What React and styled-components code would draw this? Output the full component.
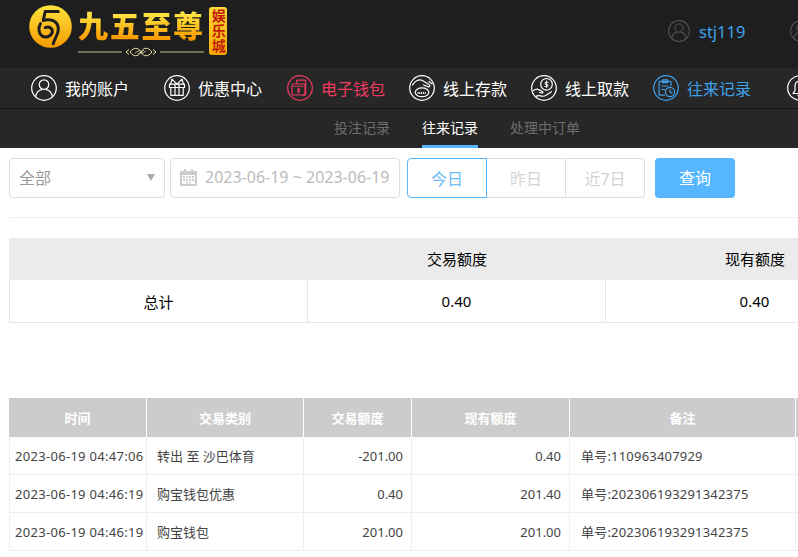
import React from 'react';
import styled, { createGlobalStyle } from 'styled-components';

const GlobalStyle = createGlobalStyle`
  html, body {
    margin: 0;
    padding: 0;
    overflow: hidden;
    background: #fff;
  }
  body {
    font-family: "Noto Sans", "Noto Sans CJK SC", sans-serif;
  }
`;

const Page = styled.div`
  width: 798px;
  height: 557px;
  overflow: hidden;
`;

const Header = styled.header`
  display: flex;
  align-items: flex-start;
  height: 68px;
  background: #1e1e1e;
`;

const Brand = styled.div`
  display: flex;
  flex: none;
  align-items: flex-start;
  width: 668px;
  height: 68px;
  padding: 5px 0 0 29px;
  box-sizing: border-box;
`;

const BrandWords = styled.div`
  display: flex;
  flex-direction: column;
  margin-left: 6px;
`;

const BrandName = styled.div`
  height: 36px;
  font-size: 30px;
  line-height: 36px;
  font-weight: 900;
  letter-spacing: 1.7px;
  white-space: nowrap;
  margin-top: 3px;
  background: linear-gradient(180deg, #ffe23f 20%, #f89a00 85%);
  -webkit-background-clip: text;
  background-clip: text;
  color: transparent;
`;

const Badge = styled.div`
  display: flex;
  align-items: center;
  justify-content: center;
  width: 18px;
  height: 48px;
  margin: 2px 0 0 4px;
  border-radius: 3px;
  background: linear-gradient(180deg, #ffd93a, #f3a900);
  color: #c11d07;
  font-size: 14px;
  line-height: 18px;
  font-weight: 700;
  letter-spacing: 1px;
  writing-mode: vertical-rl;
`;

const UserBlock = styled.div`
  display: flex;
  flex: none;
  align-items: center;
  gap: 9px;
  height: 62px;
  color: #3fa2ec;
  font-size: 16.5px;
  white-space: nowrap;
`;

const Account = styled.span`
  width: 82px;
`;

const MutedIcon = styled.span`
  color: #555;
`;

const MainNav = styled.nav`
  display: flex;
  align-items: center;
  height: 40px;
  padding-left: 31px;
  background: #272727;
  border-bottom: 1px solid #141414;
  white-space: nowrap;
`;

const NavItem = styled.a`
  display: flex;
  align-items: center;
  flex: none;
  gap: 8px;
  margin-right: ${(p) => p.$gap || 24}px;
  color: ${(p) => p.$color || '#fff'};
  font-size: 16px;
`;

const SubNav = styled.div`
  display: flex;
  gap: 32px;
  height: 39px;
  padding-left: 334px;
  background: #272727;
`;

const SubTab = styled.a`
  height: 36px;
  line-height: 38px;
  font-size: 14px;
  white-space: nowrap;
  color: ${(p) => (p.$active ? '#fff' : '#6e6e6e')};
  border-bottom: 3px solid ${(p) => (p.$active ? '#56b6ff' : 'transparent')};
`;

const Content = styled.main`
  padding: 10px 0 0 9px;
`;

const FilterBar = styled.div`
  display: flex;
  align-items: center;
  height: 40px;
  padding-bottom: 19px;
  border-bottom: 1px solid #eee;
  width: 800px;
`;

const Field = styled.div`
  display: flex;
  align-items: center;
  box-sizing: border-box;
  width: ${(p) => p.$width}px;
  height: 40px;
  margin-right: ${(p) => p.$gap}px;
  padding: 0 9px 2px;
  border: 1px solid #ddd;
  border-radius: 4px;
  font-size: 16px;
  color: #bbb;
  white-space: nowrap;
`;

const SelectLabel = styled.span`
  flex: 1;
  color: #999;
`;

const Caret = styled.i`
  width: 0;
  height: 0;
  border-left: 4px solid transparent;
  border-right: 4px solid transparent;
  border-top: 7px solid #aaa;
`;

const DateText = styled.span`
  margin-left: 8px;
`;

const RangeGroup = styled.div`
  display: flex;
  margin-right: 10px;
`;

const RangeButton = styled.button`
  box-sizing: border-box;
  width: ${(p) => (p.$first ? 80 : 79)}px;
  height: 40px;
  padding: 0;
  background: #fff;
  font: inherit;
  font-size: 16px;
  color: ${(p) => (p.$active ? '#6cbcf7' : '#d4d4d4')};
  border: 1px solid ${(p) => (p.$active ? '#56b6ff' : '#ddd')};
  border-left-width: ${(p) => (p.$first ? 1 : 0)}px;
  border-radius: ${(p) => (p.$first ? '4px 0 0 4px' : p.$last ? '0 4px 4px 0' : '0')};
`;

const SearchButton = styled.button`
  width: 80px;
  height: 40px;
  padding: 0 0 2px;
  border: 0;
  border-radius: 4px;
  background: #56b6ff;
  color: #fff;
  font: inherit;
  font-size: 16px;
`;

const SummaryTable = styled.table`
  margin-top: 20px;
  width: 895px;
  table-layout: fixed;
  border-collapse: separate;
  border-spacing: 0;
  font-size: 15px;
  color: #000;
  text-align: center;

  th {
    height: 42px;
    padding: 0 0 2px;
    box-sizing: border-box;
    background: #ebebeb;
    font-weight: 400;
  }

  td {
    height: 43px;
    padding: 0;
    box-sizing: border-box;
    border-right: 1px solid #e6e6e6;
    border-bottom: 1px solid #e6e6e6;
  }

  td:first-child {
    border-left: 1px solid #e6e6e6;
  }
`;

const RecordTable = styled.table`
  margin-top: 75px;
  width: 900px;
  table-layout: fixed;
  border-collapse: separate;
  border-spacing: 0;
  font-size: 13px;
  color: #444;

  th {
    height: 39px;
    padding: 0;
    box-sizing: border-box;
    background: #ccc;
    color: #fff;
    font-weight: 700;
    border-right: 1px solid #fff;
  }

  td {
    height: 38px;
    padding: 0 10px;
    box-sizing: border-box;
    border-right: 1px solid #eee;
    border-bottom: 1px solid #eee;
    white-space: nowrap;
  }

  td:first-child {
    border-left: 1px solid #eee;
  }
`;

const TimeCell = styled.td`
  && {
    padding: 0 0 0 5px;
    letter-spacing: 0.3px;
  }
`;

const RemarkCell = styled.td`
  && {
    padding-left: 11px;
    letter-spacing: 0.2px;
  }
`;

const AmountCell = styled.td`
  text-align: right;

  && {
    padding-right: 8px;
  }
`;

const IconSvg = styled.svg`
  display: block;
  flex: none;
  fill: none;
  stroke: currentColor;
  stroke-width: 1.2;
  stroke-linecap: round;
  stroke-linejoin: round;
`;

function Icon({ children, size = 26 }) {
  return (
    <IconSvg width={size} height={size} viewBox="0 0 26 26">
      <circle cx="13" cy="13" r="12.3" />
      {children}
    </IconSvg>
  );
}

const UserIcon = ({ size }) => (
  <Icon size={size}>
    <circle cx="13" cy="9.6" r="4.8" />
    <path d="M4.6 21.8c.6-4.4 3.6-6.6 6-7.2M21.4 21.8c-.6-4.4-3.6-6.6-6-7.2" />
  </Icon>
);

const GiftIcon = () => (
  <Icon>
    <path d="M5.5 9.2h15v3.3h-15zM6.8 12.5v7.8h12.4v-7.800M11 9.200v11.100M15 9.200v11.100" />
    <path d="M13 9.200L8 4.200 6.500 9.200M13 9.200l5-5 1.500 5" />
  </Icon>
);

const WalletIcon = () => (
  <Icon>
    <path d="M9.500 8V6.400c0-.8.500-1.200 1.200-1.200h6.800c.8 0 1.200.500 1.200 1.200V19c0 .7-.4 1.200-1.200 1.200h-1" />
    <rect x="5" y="9" width="13" height="11" rx="1.400" />
    <path d="M7 11.300h9M11.500 13.200v4.800M13 14h-2.400v1.500h1.900V17h-2.200" strokeWidth="0.900" />
  </Icon>
);

const DepositIcon = () => (
  <Icon>
    <path d="M3.500 10C6 5.500 10 4 13 5.200l7 4.300c1.600 1 .6 2.800-1.100 2.100l-4.400-1.600" />
    <path d="M20 6.500l3 2.300" />
    <ellipse cx="13" cy="17.300" rx="6.800" ry="4.400" />
    <path d="M8.500 18h9" strokeDasharray="1 0.800" strokeWidth="2.200" strokeLinecap="butt" />
  </Icon>
);

const WithdrawIcon = () => (
  <Icon>
    <circle cx="15.500" cy="9.300" r="5.800" />
    <path d="M17.200 7.300h-3v2h2.600v2.100h-3M15.500 6v6.600" strokeWidth="0.900" />
    <path d="M2.600 15.500c2.200-1.800 4.200-1.600 5.600-.6l3 1.300c1.300.7.800 2-.6 1.700l-2-.4" />
    <path d="M5 21.500c1.400-1.400 3-1 4.500-.6 2.200.6 4 .4 5.600-.6l5.400-3.600" />
  </Icon>
);

const RecordIcon = () => (
  <Icon>
    <path d="M18 10.500V7.200c0-.5-.4-.9-.9-.9H7c-.5 0-.9.400-.9.900v12c0 .5.400.9.900.9h4.500" />
    <path d="M9.500 4.800h5v2.900h-5zM8.800 11h6.400M8.800 14.500h3" />
    <circle cx="17" cy="17" r="4.600" />
    <path d="M17 14.500V17l1.900 1" />
  </Icon>
);

const BellIcon = () => (
  <Icon>
    <path d="M13 6c-3.400 0-5 2.600-5 5.400v4L6 18.500h14l-2-3.100v-4C18 8.600 16.400 6 13 6zM11 20.500c.6 1.200 3.400 1.200 4 0" />
  </Icon>
);

const CalendarIcon = () => (
  <svg width="17" height="18" viewBox="0 0 17 18" style={{ flex: 'none' }}>
    <path fill="#ccc" d="M1 3h3V1h2v2h5V1h2v2h3c.5 0 1 .5 1 1v13c0 .5-.5 1-1 1H1c-.5 0-1-.5-1-1V4c0-.5.500-1 1-1z" />
    <path fill="#fff" d="M2 7h13v9H2z" />
    <path fill="#ccc" d="M3 8h2v2H3zM6 8h2v2H6zM9 8h2v2H9zM12 8h2v2h-2zM3 11h2v2H3zM6 11h2v2H6zM9 11h2v2H9zM12 11h2v2h-2zM6 14h2v1.500H6zM9 14h2v1.500H9z" />
  </svg>
);

const LogoMark = () => (
  <svg width="43" height="44" viewBox="0 0 43 44" style={{ flex: 'none' }}>
    <defs>
      <linearGradient id="coin" x1="0" y1="0" x2="0" y2="1">
        <stop offset="0" stopColor="#ffe43d" />
        <stop offset="1" stopColor="#f59a00" />
      </linearGradient>
    </defs>
    <circle cx="21.500" cy="21.500" r="21.300" fill="url(#coin)" />
    <g fill="none" stroke="#1e1e1e" strokeWidth="3" strokeLinecap="round" strokeLinejoin="round">
      <path d="M29.300 6.500H16.200L14.300 15.300" />
      <path d="M14.300 15.300c6-1.500 15-.5 15 9 0 6-4 9-5 14.400" />
      <path d="M11.500 18.700c-2.500 4-2 9 1.200 12 3.300 2.500 8.500 1.500 10.500-3 1-4-3-7-7-5" />
    </g>
  </svg>
);

const Flourish = () => (
  <svg width="126" height="12" viewBox="0 0 126 12" style={{ display: 'block', marginTop: 2 }}>
    <g fill="none" stroke="#f0e5a8" strokeWidth="1">
      <path d="M0 6h44M82 6h44" strokeWidth="0.800" />
      <path d="M48 6l3-2.500M78 6l-3-2.500M48 6l3 2.500M78 6l-3 2.500" />
      <path d="M52 6c4-5 8-5 11 0s7 5 11 0c-4-5-8-5-11 0s-7 5-11 0z" />
      <path d="M57 7l5-3M60 8l6-4M63 8l5-3" strokeWidth="0.700" />
    </g>
  </svg>
);

const navItems = [
  { label: '我的账户', Glyph: UserIcon, gap: 35 },
  { label: '优惠中心', Glyph: GiftIcon, gap: 25 },
  { label: '电子钱包', Glyph: WalletIcon, color: '#ef3a60' },
  { label: '线上存款', Glyph: DepositIcon },
  { label: '线上取款', Glyph: WithdrawIcon },
  { label: '往来记录', Glyph: RecordIcon, color: '#3fa2ec', gap: 36 },
  { label: '', Glyph: BellIcon },
];

const records = [
  ['2023-06-19 04:47:06', '转出 至 沙巴体育', '-201.00', '0.40', '单号:110963407929'],
  ['2023-06-19 04:46:19', '购宝钱包优惠', '0.40', '201.40', '单号:202306193291342375'],
  ['2023-06-19 04:46:19', '购宝钱包', '201.00', '201.00', '单号:202306193291342375'],
];

function App() {
  return (
    <Page>
      <GlobalStyle />
      <Header>
        <Brand>
          <LogoMark />
          <BrandWords>
            <BrandName>九五至尊</BrandName>
            <Flourish />
          </BrandWords>
          <Badge>娱乐城</Badge>
        </Brand>
        <UserBlock>
          <MutedIcon>
            <UserIcon size={22} />
          </MutedIcon>
          <Account>stj119</Account>
          <MutedIcon>
            <UserIcon size={22} />
          </MutedIcon>
        </UserBlock>
      </Header>

      <MainNav>
        {navItems.map(({ label, Glyph, color, gap }) => (
          <NavItem key={label} $color={color} $gap={gap}>
            <Glyph />
            {label}
          </NavItem>
        ))}
      </MainNav>

      <SubNav>
        <SubTab>投注记录</SubTab>
        <SubTab $active>往来记录</SubTab>
        <SubTab>处理中订单</SubTab>
      </SubNav>

      <Content>
        <FilterBar>
          <Field $width={156} $gap={5}>
            <SelectLabel>全部</SelectLabel>
            <Caret />
          </Field>
          <Field $width={230} $gap={7}>
            <CalendarIcon />
            <DateText>2023-06-19 ~ 2023-06-19</DateText>
          </Field>
          <RangeGroup>
            <RangeButton $first $active>今日</RangeButton>
            <RangeButton>昨日</RangeButton>
            <RangeButton $last>近7日</RangeButton>
          </RangeGroup>
          <SearchButton>查询</SearchButton>
        </FilterBar>

        <SummaryTable>
          <colgroup>
            <col style={{ width: 299 }} />
            <col style={{ width: 298 }} />
            <col style={{ width: 298 }} />
          </colgroup>
          <thead>
            <tr>
              <th />
              <th>交易额度</th>
              <th>现有额度</th>
            </tr>
          </thead>
          <tbody>
            <tr>
              <td>总计</td>
              <td>0.40</td>
              <td>0.40</td>
            </tr>
          </tbody>
        </SummaryTable>

        <RecordTable>
          <colgroup>
            <col style={{ width: 138 }} />
            <col style={{ width: 157 }} />
            <col style={{ width: 108 }} />
            <col style={{ width: 158 }} />
            <col style={{ width: 226 }} />
            <col />
          </colgroup>
          <thead>
            <tr>
              <th>时间</th>
              <th>交易类别</th>
              <th>交易额度</th>
              <th>现有额度</th>
              <th>备注</th>
              <th />
            </tr>
          </thead>
          <tbody>
            {records.map((row) => (
              <tr key={row[4] + row[1]}>
                <TimeCell>{row[0]}</TimeCell>
                <td>{row[1]}</td>
                <AmountCell>{row[2]}</AmountCell>
                <AmountCell>{row[3]}</AmountCell>
                <RemarkCell>{row[4]}</RemarkCell>
                <td />
              </tr>
            ))}
          </tbody>
        </RecordTable>
      </Content>
    </Page>
  );
}

export default App;
